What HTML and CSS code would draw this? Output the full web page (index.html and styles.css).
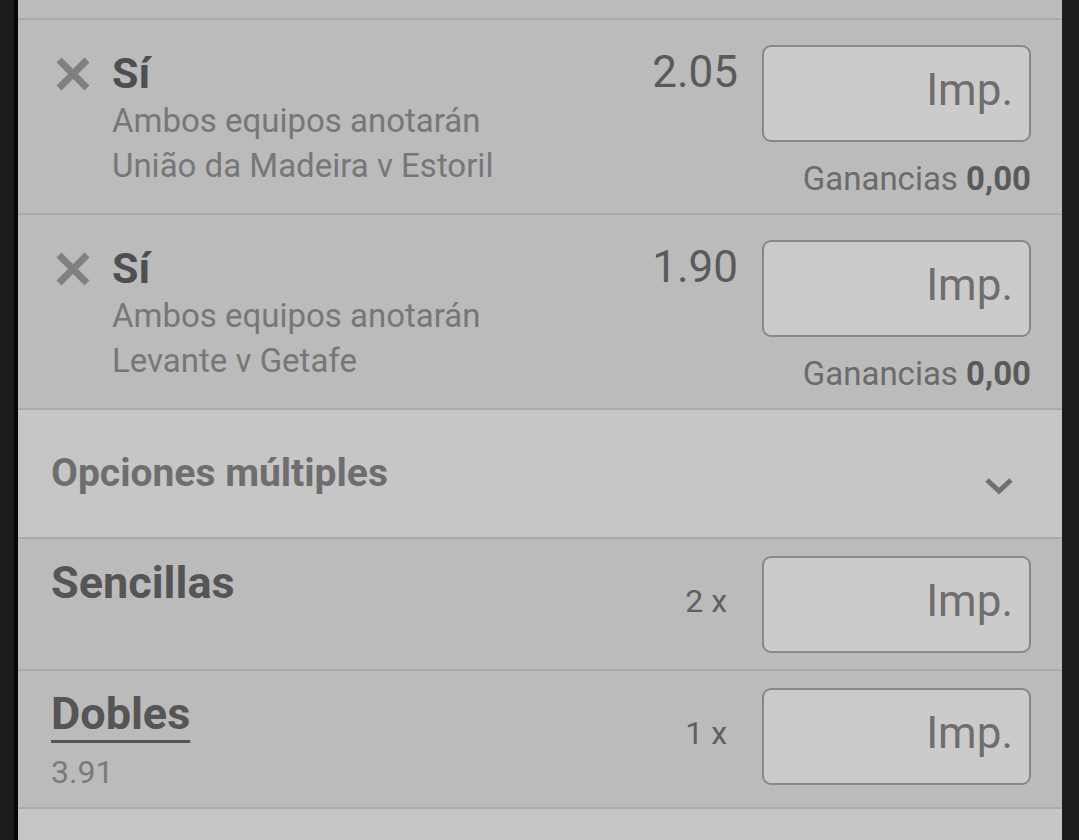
FILE: index.html
```html
<!DOCTYPE html>
<html lang="es">
<head>
<meta charset="utf-8">
<link rel="stylesheet" href="styles.css">
</head>
<body>
<div class="frame">
  <div class="panel">
    <div class="strip-top"></div>

    <div class="sel">
      <div class="sel-main">
        <svg class="x-icon" width="36" height="34" viewBox="0 0 36 34"><path d="M4 3 L32 31 M32 3 L4 31" stroke="#808080" stroke-width="7" stroke-linecap="butt" fill="none"/></svg>
        <div class="sel-text">
          <div class="sel-name">Sí</div>
          <div class="sel-line">Ambos equipos anotarán</div>
          <div class="sel-line">União da Madeira v Estoril</div>
        </div>
      </div>
      <div class="odds">2.05</div>
      <div class="stake">
        <div class="imp">Imp.</div>
        <div class="gain">Ganancias <b>0,00</b></div>
      </div>
    </div>

    <div class="sel">
      <div class="sel-main">
        <svg class="x-icon" width="36" height="34" viewBox="0 0 36 34"><path d="M4 3 L32 31 M32 3 L4 31" stroke="#808080" stroke-width="7" stroke-linecap="butt" fill="none"/></svg>
        <div class="sel-text">
          <div class="sel-name">Sí</div>
          <div class="sel-line">Ambos equipos anotarán</div>
          <div class="sel-line">Levante v Getafe</div>
        </div>
      </div>
      <div class="odds">1.90</div>
      <div class="stake">
        <div class="imp">Imp.</div>
        <div class="gain">Ganancias <b>0,00</b></div>
      </div>
    </div>

    <div class="options">
      <div class="options-title">Opciones múltiples</div>
      <svg class="chev" width="32" height="20" viewBox="0 0 32 20"><path d="M3 5 L15 16 L27 5" stroke="#707070" stroke-width="5" fill="none"/></svg>
    </div>

    <div class="multi multi-single">
      <div class="multi-left">
        <div class="multi-name">Sencillas</div>
      </div>
      <div class="mult">2 x</div>
      <div class="stake">
        <div class="imp">Imp.</div>
      </div>
    </div>

    <div class="multi multi-double">
      <div class="multi-left">
        <div class="multi-name underlined">Dobles</div>
        <div class="multi-odds">3.91</div>
      </div>
      <div class="mult">1 x</div>
      <div class="stake">
        <div class="imp">Imp.</div>
      </div>
    </div>

    <div class="strip-bottom"></div>
  </div>
</div>
</body>
</html>
```
FILE: styles.css
```css
* { box-sizing: border-box; }
html, body { margin: 0; padding: 0; }
body {
  background: #1c1c1c;
  font-family: Roboto, "Noto Sans", sans-serif;
  width: 1079px;
  height: 840px;
  overflow: hidden;
}
.frame {
  padding-left: 14px;
}
.panel {
  width: 1048px;
  border-left: 4px solid #070707;
  background: #bbbbbb;
  height: 840px;
}
.strip-top {
  height: 20px;
  background: #bbbbbb;
  border-bottom: 2px solid #aaaaaa;
}
.sel {
  height: 195px;
  display: flex;
  align-items: flex-start;
  padding: 0 31px 0 37px;
  border-bottom: 2px solid #aaaaaa;
  background: #bbbbbb;
}
.sel-main {
  flex: 1;
  display: flex;
  align-items: flex-start;
  padding-top: 37px;
}
.x-icon {
  flex: none;
  margin-right: 21px;
}
.sel-text {
  margin-top: -9px;
}
.sel-name {
  font-size: 43px;
  font-weight: 700;
  line-height: 50px;
  color: #4f4f4f;
}
.sel-line {
  font-size: 33px;
  line-height: 45px;
  color: #777777;
}
.odds {
  font-size: 44px;
  line-height: 50px;
  color: #5a5a5a;
  padding-top: 27px;
  margin-right: 24px;
}
.stake {
  width: 269px;
  padding-top: 25px;
  display: flex;
  flex-direction: column;
  align-items: flex-end;
}
.imp {
  width: 269px;
  height: 97px;
  border: 2px solid #888888;
  border-radius: 9px;
  background: #cbcbcb;
  text-align: right;
  padding: 18px 16px 0 0;
  font-size: 44px;
  line-height: 50px;
  color: #6e6e6e;
}
.gain {
  margin-top: 17px;
  font-size: 33px;
  line-height: 40px;
  color: #6b6b6b;
}
.gain b {
  color: #5a5a5a;
  font-weight: 700;
}
.options {
  height: 129px;
  background: #c6c6c6;
  border-bottom: 2px solid #aaaaaa;
  display: flex;
  align-items: flex-start;
  justify-content: space-between;
  padding: 40px 46px 0 33px;
}
.options-title {
  font-size: 39px;
  font-weight: 700;
  line-height: 46px;
  color: #6e6e6e;
}
.chev {
  margin-top: 25px;
}
.multi {
  display: flex;
  align-items: flex-start;
  padding: 0 31px 0 33px;
  border-bottom: 2px solid #aaaaaa;
  background: #bbbbbb;
}
.multi-single { height: 132px; }
.multi-double { height: 138px; }
.multi-left {
  flex: 1;
}
.multi-single .multi-left { padding-top: 19px; }
.multi-double .multi-left { padding-top: 18px; }
.multi-name {
  display: inline-block;
  font-size: 45px;
  font-weight: 700;
  line-height: 50px;
  color: #555555;
}
.underlined {
  text-decoration: underline;
  text-decoration-thickness: 3px;
  text-underline-offset: 11px;
}
.multi-odds {
  margin-top: 13px;
  font-size: 32px;
  line-height: 40px;
  color: #7a7a7a;
}
.mult {
  font-size: 32px;
  line-height: 40px;
  color: #606060;
  padding-top: 42px;
  margin-right: 35px;
}
.multi .stake {
  padding-top: 17px;
}
.strip-bottom {
  height: 40px;
  background: #c6c6c6;
}
```
